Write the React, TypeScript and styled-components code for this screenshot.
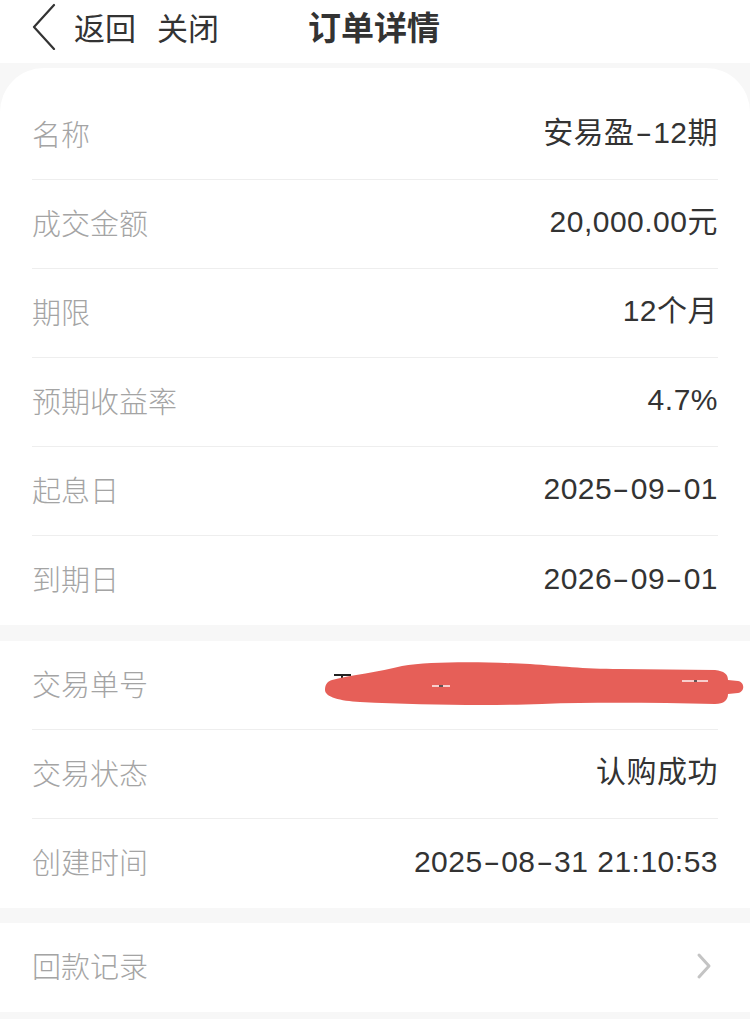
import React from "react";
import styled, { createGlobalStyle } from "styled-components";

const GlobalStyle = createGlobalStyle`
  html, body {
    margin: 0;
    padding: 0;
    background: #f7f7f7;
  }
  body {
    font-family: "Noto Sans CJK SC", "Liberation Sans", sans-serif;
    -webkit-font-smoothing: antialiased;
  }
  * { box-sizing: border-box; }
`;

const Page = styled.div`
  min-height: 100vh;
  background: #f7f7f7;
  display: flex;
  flex-direction: column;
  padding-bottom: 8px;
`;

const Header = styled.header`
  height: 63px;
  padding: 0 0 11px 32px;
  background: #ffffff;
  display: flex;
  align-items: center;
`;

const BackIcon = styled.svg`
  width: 24px;
  height: 48px;
  flex: none;
`;

const NavLink = styled.span<{ $ml: number }>`
  margin-left: ${(p) => p.$ml}px;
  font-size: 31px;
  line-height: 1;
  color: #333333;
`;

const Title = styled.h1`
  margin: 0 0 0 89px;
  font-size: 33px;
  line-height: 1;
  font-weight: 700;
  color: #333333;
`;

const Card = styled.section<{ $mt: number; $rounded?: boolean; $pt?: number }>`
  margin-top: ${(p) => p.$mt}px;
  padding-top: ${(p) => p.$pt ?? 0}px;
  background: #ffffff;
  border-radius: ${(p) => (p.$rounded ? "44px 44px 0 0" : "0")};
`;

const Row = styled.div`
  position: relative;
  height: 89px;
  margin: 0 32px;
  padding-bottom: 4px;
  display: flex;
  align-items: center;
  justify-content: space-between;
  border-bottom: 1px solid #eeeeee;
  &:last-child {
    border-bottom: none;
  }
`;

const Label = styled.span`
  font-size: 29px;
  font-weight: 300;
  color: #a4a4a4;
  line-height: 1;
`;

const Value = styled.span`
  font-family: "Liberation Sans", "Noto Sans CJK SC", sans-serif;
  font-size: 30px;
  letter-spacing: 0.5px;
  color: #333333;
  line-height: 1;
  white-space: nowrap;
`;

const Dash = styled.span`
  display: inline-block;
  margin: 0 4px;
  transform: scaleX(1.7);
`;

const Chevron = styled.svg`
  width: 16px;
  height: 28px;
  margin-right: 6px;
  flex: none;
`;

const Redaction = styled.svg`
  position: absolute;
  left: 288px;
  top: 9px;
  width: 430px;
  height: 70px;
  overflow: visible;
`;

function Formatted({ text }: { text: string }) {
  const parts = text.split("-");
  return (
    <Value>
      {parts.map((p, i) => (
        <React.Fragment key={i}>
          {i > 0 && <Dash>-</Dash>}
          {p}
        </React.Fragment>
      ))}
    </Value>
  );
}

const rows1: [string, string][] = [
  ["名称", "安易盈-12期"],
  ["成交金额", "20,000.00元"],
  ["期限", "12个月"],
  ["预期收益率", "4.7%"],
  ["起息日", "2025-09-01"],
  ["到期日", "2026-09-01"],
];

export default function App() {
  return (
    <>
      <GlobalStyle />
      <Page>
        <Header>
          <BackIcon viewBox="0 0 24 48">
            <path
              d="M22 3 L2 25 L22 47"
              fill="none"
              stroke="#333"
              strokeWidth="2.2"
              strokeLinecap="round"
              strokeLinejoin="round"
            />
          </BackIcon>
          <NavLink $ml={18}>返回</NavLink>
          <NavLink $ml={21}>关闭</NavLink>
          <Title>订单详情</Title>
        </Header>

        <Card $mt={5} $rounded $pt={23}>
          {rows1.map(([l, v]) => (
            <Row key={l}>
              <Label>{l}</Label>
              <Formatted text={v} />
            </Row>
          ))}
        </Card>

        <Card $mt={16}>
          <Row>
            <Label>交易单号</Label>
            <Value />
            <Redaction viewBox="0 0 430 70">
              <path d="M14 25 L31 25 M22 25 L22 33" stroke="#222" strokeWidth="2" />
              <path
                d="M12 30 C30 25, 60 22, 82 16 C112 11, 170 12, 210 14 C240 16, 262 19, 300 19 L395 20 C404 21, 408 24, 408 30 L418 31 C425 32, 425 42, 418 43 L408 44 C408 50, 404 54, 395 54 C340 53, 280 52, 222 54 C170 56, 100 55, 40 52 C20 51, 5 47, 5 40 C5 34, 8 31, 12 30 Z"
                fill="#e65f58"
              />
              <path d="M112 36 L130 36" stroke="#fff" strokeWidth="1.4" />
              <path d="M119 36 L123 36" stroke="#222" strokeWidth="1.4" />
              <path d="M362 31 L388 31" stroke="#fff" strokeWidth="1.4" />
              <path d="M374 31 L377 31" stroke="#222" strokeWidth="1.4" />
            </Redaction>
          </Row>
          <Row>
            <Label>交易状态</Label>
            <Formatted text="认购成功" />
          </Row>
          <Row>
            <Label>创建时间</Label>
            <Formatted text="2025-08-31 21:10:53" />
          </Row>
        </Card>

        <Card $mt={15}>
          <Row>
            <Label>回款记录</Label>
            <Chevron viewBox="0 0 16 28">
              <path
                d="M3 3 L13 14 L3 25"
                fill="none"
                stroke="#c4c4c4"
                strokeWidth="3"
                strokeLinecap="round"
                strokeLinejoin="round"
              />
            </Chevron>
          </Row>
        </Card>
      </Page>
    </>
  );
}
